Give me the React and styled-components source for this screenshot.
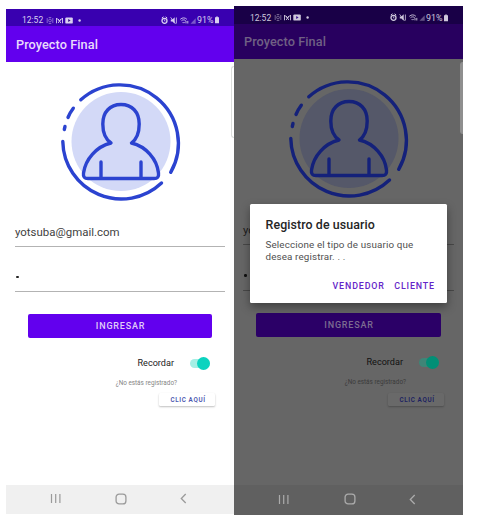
import React from 'react';
import styled, { createGlobalStyle, ThemeProvider } from 'styled-components';

const light = {
  width: 228, height: 505, top: 9, status: 17, bar: 36, hero: 160, email: 24.5, pass: 45.5, gap: 22, button: 24,
  recordar: 52, link: 12, linkBtn: 13, linkGap: 4, nav: 29, handleTop: 57,
  statusBg: '#3900b0', barBg: '#6200ee', page: '#ffffff', title: '#e9dcfc', statusText: '#d9cff0',
  text: '#3f3f3f', strong: '#222', line: '#b3b3b3', ring: '#2b43d0', disc: '#d3d9f7',
  buttonBg: '#6200ee', buttonText: '#e0ccf8', track: '#a5efe5', thumb: '#0bd3bf', muted: '#858585',
  linkText: '#4c57b0', linkBg: '#ffffff', navBg: '#f0f0f0', navIcon: '#9a9a9a',
  handleBg: '#ffffff', handleLine: '#dcdedc', shadow: '0 1px 2px rgba(0,0,0,.25)',
};

const dimmed = {
  width: 229, height: 509, top: 6, status: 18, bar: 35, hero: 160.5, email: 25, pass: 46, gap: 22.5, button: 24,
  recordar: 52, link: 13, linkBtn: 13, linkGap: 3.5, nav: 30, handleTop: 56,
  statusBg: '#190047', barBg: '#28005f', page: '#666666', title: '#706184', statusText: '#cfc8dc',
  text: '#1c1c1c', strong: '#111', line: '#484848', ring: '#14217a', disc: '#555869',
  buttonBg: '#2b0067', buttonText: '#7c6c91', track: '#3f8577', thumb: '#028f76', muted: '#3b3b3b',
  linkText: '#1c2161', linkBg: '#696969', navBg: '#606060', navIcon: '#ababab',
  handleBg: '#8f8f8f', handleLine: '#8f8f8f', shadow: '0 1px 2px rgba(0,0,0,.25)',
};

const Global = createGlobalStyle`
  * { box-sizing: border-box; }
  body { margin: 0; background: #fff; font-family: Roboto, "Liberation Sans", sans-serif; }
`;

const Stage = styled.main`
  display: flex;
  width: 481px;
  height: 529px;
  padding-left: 6px;
  overflow: hidden;
`;

const Phone = styled.section`
  position: relative;
  display: flex;
  flex-direction: column;
  width: ${p => p.theme.width}px;
  height: ${p => p.theme.height}px;
  margin-top: ${p => p.theme.top}px;
  background: ${p => p.theme.page};
  overflow: hidden;
`;

const StatusBar = styled.div`
  display: flex;
  flex: none;
  align-items: center;
  justify-content: space-between;
  height: ${p => p.theme.status}px;
  padding: 5px 15px 0 16px;
  background: ${p => p.theme.statusBg};
  color: ${p => p.theme.statusText};
  font-size: 8.5px;
  line-height: 10px;
`;

const StatusGroup = styled.div`
  display: flex;
  align-items: center;
  height: 11px;
`;

const Clock = styled.span`
  width: 23.5px;
`;

const Percent = styled.span`
  width: 18px;
  font-size: 8.9px;
`;

const AppBar = styled.header`
  flex: none;
  height: ${p => p.theme.bar}px;
  padding-left: 10px;
  background: ${p => p.theme.barBg};
  color: ${p => p.theme.title};
  font-size: 12.7px;
  font-weight: 500;
  line-height: ${p => p.theme.bar + 1}px;
  letter-spacing: 0.08px;
`;

const Content = styled.div`
  display: flex;
  flex: 1;
  flex-direction: column;
  min-height: 0;
`;

const Hero = styled.div`
  flex: none;
  height: ${p => p.theme.hero}px;
  padding: 18px 0 0 45px;
  svg { display: block; }
`;

const Field = styled.div`
  display: flex;
  flex: none;
  align-items: ${p => (p.$secret ? 'flex-end' : 'flex-start')};
  height: ${p => (p.$secret ? p.theme.pass : p.theme.email)}px;
  margin: 0 9px;
  padding-bottom: ${p => (p.$secret ? 13 : 0)}px;
  border-bottom: 1px solid ${p => p.theme.line};
  color: ${p => p.theme.text};
  font-size: 11.45px;
  line-height: 21px;
`;

const Dot = styled.i`
  width: 2.5px;
  height: 2.5px;
  margin-left: 1px;
  border-radius: 50%;
  background: ${p => p.theme.strong};
`;

const Submit = styled.button`
  flex: none;
  height: ${p => p.theme.button}px;
  margin: ${p => p.theme.gap}px 22px 0;
  padding: 0 0 0 1px;
  border: 0;
  border-radius: 2px;
  background: ${p => p.theme.buttonBg};
  color: ${p => p.theme.buttonText};
  font: 500 9px/24px Roboto, sans-serif;
  letter-spacing: 0.8px;
`;

const Remember = styled.label`
  display: flex;
  flex: none;
  align-items: center;
  justify-content: flex-end;
  gap: 16px;
  height: ${p => p.theme.recordar}px;
  padding: 0 24px 2px 0;
  color: ${p => p.theme.strong};
  font-size: 9.1px;
`;

const Track = styled.span`
  display: flex;
  justify-content: flex-end;
  align-items: center;
  width: 20px;
  height: 9px;
  border-radius: 5px;
  background: ${p => p.theme.track};
`;

const Thumb = styled.span`
  flex: none;
  width: 13px;
  height: 13px;
  border-radius: 50%;
  background: ${p => p.theme.thumb};
`;

const Question = styled.p`
  flex: none;
  align-self: flex-end;
  height: ${p => p.theme.link}px;
  margin: -13px 57px 0 0;
  color: ${p => p.theme.muted};
  font-size: 6.35px;
  line-height: 12px;
`;

const LinkButton = styled.button`
  flex: none;
  align-self: flex-end;
  width: 56px;
  height: ${p => p.theme.linkBtn}px;
  margin: ${p => p.theme.linkGap}px 19px 0 0;
  padding: 1px 0 0 2px;
  border: 0;
  border-radius: 1.5px;
  background: ${p => p.theme.linkBg};
  box-shadow: ${p => p.theme.shadow};
  color: ${p => p.theme.linkText};
  font: 600 6.3px/12px Roboto, sans-serif;
  letter-spacing: 0.64px;
`;

const NavBar = styled.nav`
  display: flex;
  flex: none;
  align-items: center;
  height: ${p => p.theme.nav}px;
  padding: 0 47px 2px 44px;
  justify-content: space-between;
  background: ${p => p.theme.navBg};
  color: ${p => p.theme.navIcon};
`;

const EdgeHandle = styled.div`
  position: absolute;
  top: ${p => p.theme.handleTop}px;
  right: 0;
  width: 3px;
  height: 72px;
  border: 1px solid ${p => p.theme.handleLine};
  border-right: 0;
  border-radius: 3px 0 0 3px;
  background: ${p => p.theme.handleBg};
`;

const Dialog = styled.div`
  position: absolute;
  top: 197.5px;
  left: 16px;
  width: 197px;
  height: 99.5px;
  padding: 12px 12px 0 15.5px;
  border-radius: 1.5px;
  background: #fff;
  box-shadow: 0 4px 10px rgba(0, 0, 0, 0.38);
`;

const DialogTitle = styled.h2`
  margin: 0;
  color: #252525;
  font-size: 12.4px;
  font-weight: 500;
  line-height: 18px;
  letter-spacing: 0.1px;
`;

const DialogText = styled.p`
  margin: 5px 0 0;
  color: #505050;
  font-size: 9.8px;
  line-height: 12px;
  letter-spacing: 0.14px;
`;

const Actions = styled.div`
  display: flex;
  justify-content: flex-end;
  gap: 9.5px;
  margin-top: 14.5px;
`;

const Action = styled.button`
  padding: 0;
  border: 0;
  background: none;
  color: #6425c8;
  font: 500 8.9px/18px Roboto, sans-serif;
  letter-spacing: 0.86px;
`;

const LeftIcons = () => (
  <svg width="38" height="9" viewBox="0 0 38 9" fill="none" stroke="currentColor">
    <g opacity=".6" strokeWidth=".8">
      <path d="M1.2 2v5M6.8 2v5M2.7 1.5h2.6M2.7 7.5h2.6" />
      <circle cx="4" cy="4.5" r="1.4" />
    </g>
    <path d="M10.5 7.3V2L13.5 5l3-3v5.3M12.2 7l2.6-4M14.8 7l-2.6-4" strokeWidth=".9" />
    <rect x="19.3" y="1.4" width="7.5" height="6.2" rx="1.2" fill="currentColor" stroke="none" />
    <path d="M22.2 3.1v2.8l2.4-1.4z" fill="#37128a" stroke="none" />
    <circle cx="33.6" cy="4.5" r="1.2" fill="currentColor" stroke="none" />
  </svg>
);

const RightIcons = () => (
  <svg width="36" height="9" viewBox="0 0 36 9" fill="none" stroke="currentColor">
    <path d="M.8 2 2.6.8M6.2 2 4.6.8" />
    <circle cx="3.5" cy="4.8" r="2.5" strokeWidth="1.3" />
    <path d="M3.5 3.4v1.6h1" strokeWidth=".7" />
    <path d="M9.8 3.4h1.6l2.3-2.1v6.4l-2.3-2.1H9.8z" fill="currentColor" stroke="none" />
    <path d="m9.6 1.3 5 6.4M15.4 1.5v6" strokeWidth=".8" />
    <path d="M19.3 3.3c2.1-1.9 4.6-1.9 6.6 0M20.5 4.7c1.3-1.1 2.9-1.1 4.2 0M21.7 6.1l.9 1 1-1M25 5v2.4M26.8 4.9v2.6" strokeWidth=".9" />
    <path d="M29.5 7.8h5.2V2.2z" fill="currentColor" opacity=".42" stroke="none" />
  </svg>
);

const Battery = () => (
  <svg width="4" height="8" viewBox="0 0 4 8" fill="currentColor">
    <path d="M1.2.4h1.6v.8H4v6H0v-6h1.2z" />
  </svg>
);

const Avatar = ({ ring, disc }) => (
  <svg width="134" height="124" viewBox="51 80 134 124" fill="none" stroke={ring} strokeWidth="3.4" strokeLinecap="round" strokeLinejoin="round">
    <circle cx="121" cy="141.5" r="49.5" fill={disc} stroke="none" />
    <path d="M80.8 99.8A58.5 58.5 0 0 1 170.7 172.3M161.5 183A58.5 58.5 0 0 1 62.8 141.5M64.3 129.5l.7-3M68 117.5Q70 112.5 73.3 108.2" />
    <path d="M111 143C104.500 138.500 102.800 131.500 102.800 124C102.800 112 110 104.500 121 104.500S139.200 112 139.200 124C139.200 131.500 137.500 138.500 131.500 143C146 146.500 157 159 158.500 173C159 177 157.500 178.500 154 178.500H88C84.500 178.500 83 177 83.500 173C85.500 159 96.500 146.500 111 143ZM101 178V162M141 178V162" />
  </svg>
);

const Recents = () => (
  <svg width="12" height="11" viewBox="0 0 12 11" stroke="currentColor" strokeWidth="1.2"><path d="M1.500 1v9M5.700 1v9M9.900 1v9" /></svg>
);
const Home = () => (
  <svg width="12" height="12" viewBox="0 0 12 12" fill="none" stroke="currentColor" strokeWidth="1.3"><rect x="1.100" y="1.100" width="9.800" height="9.800" rx="3" /></svg>
);
const Back = () => (
  <svg width="7" height="11" viewBox="0 0 7 11" fill="none" stroke="currentColor" strokeWidth="1.300"><path d="M5.700 1 1.300 5.500l4.400 4.500" /></svg>
);

function LoginScreen({ theme, children }) {
  return (
    <ThemeProvider theme={theme}>
      <Phone>
        <StatusBar>
          <StatusGroup><Clock>12:52</Clock><LeftIcons /></StatusGroup>
          <StatusGroup><RightIcons /><Percent>91%</Percent><Battery /></StatusGroup>
        </StatusBar>
        <AppBar>Proyecto Final</AppBar>
        <Content>
          <Hero><Avatar ring={theme.ring} disc={theme.disc} /></Hero>
          <Field>yotsuba@gmail.com</Field>
          <Field $secret><Dot /></Field>
          <Submit>INGRESAR</Submit>
          <Remember>Recordar<Track><Thumb /></Track></Remember>
          <Question>¿No estás registrado?</Question>
          <LinkButton>CLIC AQUÍ</LinkButton>
        </Content>
        <NavBar><Recents /><Home /><Back /></NavBar>
        <EdgeHandle />
        {children}
      </Phone>
    </ThemeProvider>
  );
}

export default function App() {
  return (
    <>
      <Global />
      <Stage>
        <LoginScreen theme={light} />
        <LoginScreen theme={dimmed}>
          <Dialog role="dialog">
            <DialogTitle>Registro de usuario</DialogTitle>
            <DialogText>Seleccione el tipo de usuario que<br />desea registrar. . .</DialogText>
            <Actions><Action>VENDEDOR</Action><Action>CLIENTE</Action></Actions>
          </Dialog>
        </LoginScreen>
      </Stage>
    </>
  );
}
